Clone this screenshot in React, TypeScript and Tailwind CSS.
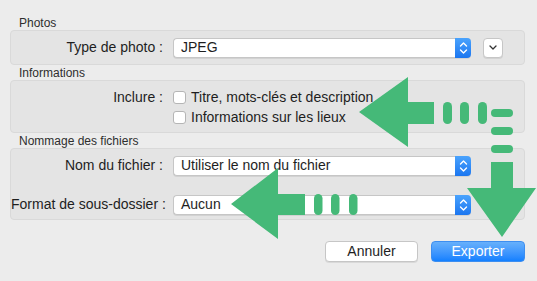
import React from "react";

const font = { fontFamily: '"Liberation Sans", Arial, sans-serif' };

function Stepper() {
  return (
    <div className="w-[16px] h-full rounded-r-[4px] bg-gradient-to-b from-[#4aa3fd] to-[#1b76f0] flex items-center justify-center">
      <svg width="9" height="14" viewBox="0 0 9 14" fill="none" stroke="white" strokeWidth="1.4" strokeLinecap="round" strokeLinejoin="round">
        <path d="M1.5 5 L4.5 2 L7.5 5" />
        <path d="M1.5 9 L4.5 12 L7.5 9" />
      </svg>
    </div>
  );
}

function Select({ value }: { value: string }) {
  return (
    <div className="w-[298px] h-[20px] flex items-stretch bg-white rounded-[4px] border border-[#c6c6c6] border-r-0 shadow-[0_1px_0_rgba(0,0,0,0.08)]">
      <div className="flex-1 flex items-center pl-[7px] text-[14px] text-[#1e1e1e]">{value}</div>
      <div className="-my-px">
        <Stepper />
      </div>
    </div>
  );
}

function Checkbox({ label }: { label: string }) {
  return (
    <div className="h-[20px] flex items-center">
      <div className="w-[13px] h-[13px] bg-white border border-[#b5b5b5] rounded-[3px]" />
      <span className="ml-[5px] text-[14px] text-[#1e1e1e]">{label}</span>
    </div>
  );
}

function SectionLabel({ children }: { children: React.ReactNode }) {
  return <div className="h-[14px] leading-[14px] pl-[9px] text-[12px] text-[#2e2e2e]">{children}</div>;
}

function Panel({ children, className }: { children: React.ReactNode; className: string }) {
  return (
    <div className={"bg-[#e4e4e4] border border-[#d9d9d9] rounded-[4px] " + className}>{children}</div>
  );
}

function Label({ children }: { children: React.ReactNode }) {
  return <div className="w-[153px] text-right text-[14px] text-[#1e1e1e] pr-[1px] whitespace-nowrap">{children}</div>;
}

export default function App() {
  const g = "#45b978";
  return (
    <div className="relative w-[537px] h-[281px] bg-[#ececec] overflow-hidden" style={font}>
      <div className="pl-[10px] pr-[12px] pt-[16px]">
        <SectionLabel>Photos</SectionLabel>
        <Panel className="h-[35px] pt-[6px]">
          <div className="flex items-center">
            <Label>Type de photo :</Label>
            <div className="ml-[9px]">
              <Select value="JPEG" />
            </div>
            <div className="ml-[12px] w-[20px] h-[20px] bg-white border border-[#c6c6c6] rounded-[4px] flex items-center justify-center shadow-[0_1px_0_rgba(0,0,0,0.08)]">
              <svg width="8" height="5" viewBox="0 0 8 5" fill="none" stroke="#333" strokeWidth="1.3" strokeLinecap="round" strokeLinejoin="round">
                <path d="M1 1 L4 4 L7 1" />
              </svg>
            </div>
          </div>
        </Panel>
        <div className="mt-[1px]">
          <SectionLabel>Informations</SectionLabel>
        </div>
        <Panel className="h-[53px] pt-[6px]">
          <div className="flex">
            <Label>
              <div className="h-[20px] leading-[20px]">Inclure :</div>
            </Label>
            <div className="ml-[9px] flex flex-col">
              <Checkbox label="Titre, mots-clés et description" />
              <Checkbox label="Informations sur les lieux" />
            </div>
          </div>
        </Panel>
        <div className="mt-[1px]">
          <SectionLabel>Nommage des fichiers</SectionLabel>
        </div>
        <Panel className="h-[72px] pt-[6px]">
          <div className="flex flex-col gap-[18px]">
            <div className="flex items-center">
              <Label>Nom du fichier :</Label>
              <div className="ml-[9px]">
                <Select value="Utiliser le nom du fichier" />
              </div>
            </div>
            <div className="flex items-center">
              <Label>Format de sous-dossier :</Label>
              <div className="ml-[9px]">
                <Select value="Aucun" />
              </div>
            </div>
          </div>
        </Panel>
        <div className="flex justify-end mt-[21px] gap-[13px]">
          <div className="w-[93px] h-[21px] bg-white border border-[#c6c6c6] rounded-[4px] flex items-center justify-center text-[14px] text-[#1e1e1e] shadow-[0_1px_0_rgba(0,0,0,0.08)]">
            Annuler
          </div>
          <div className="w-[94px] h-[21px] rounded-[4px] bg-gradient-to-b from-[#67b0fb] to-[#1180ff] border border-[#3d8ef0] flex items-center justify-center text-[14px] text-white">
            Exporter
          </div>
        </div>
      </div>

      <svg className="absolute inset-0 pointer-events-none" width="537" height="281" viewBox="0 0 537 281">
        <polygon fill={g} points="359,112 408,77 408,102 434,102 434,124 408,124 408,147" />
        <rect x="443" y="102" width="9" height="22" rx="4.5" fill={g} />
        <rect x="460" y="102" width="9" height="22" rx="4.5" fill={g} />
        <rect x="478" y="102" width="9" height="22" rx="4.5" fill={g} />
        <rect x="491" y="109" width="22" height="8" rx="4" fill={g} />
        <rect x="491" y="127" width="22" height="8" rx="4" fill={g} />
        <rect x="491" y="145" width="22" height="8" rx="4" fill={g} />
        <polygon fill={g} points="491,162 513,162 513,188 536,188 502,237 467,188 491,188" />
        <polygon fill={g} points="231,204 278,168 278,194 305,194 305,215 278,215 278,239" />
        <rect x="314" y="194" width="8.5" height="21" rx="4.25" fill={g} />
        <rect x="331" y="194" width="8.5" height="21" rx="4.25" fill={g} />
        <rect x="349" y="194" width="8.5" height="21" rx="4.25" fill={g} />
      </svg>
    </div>
  );
}
